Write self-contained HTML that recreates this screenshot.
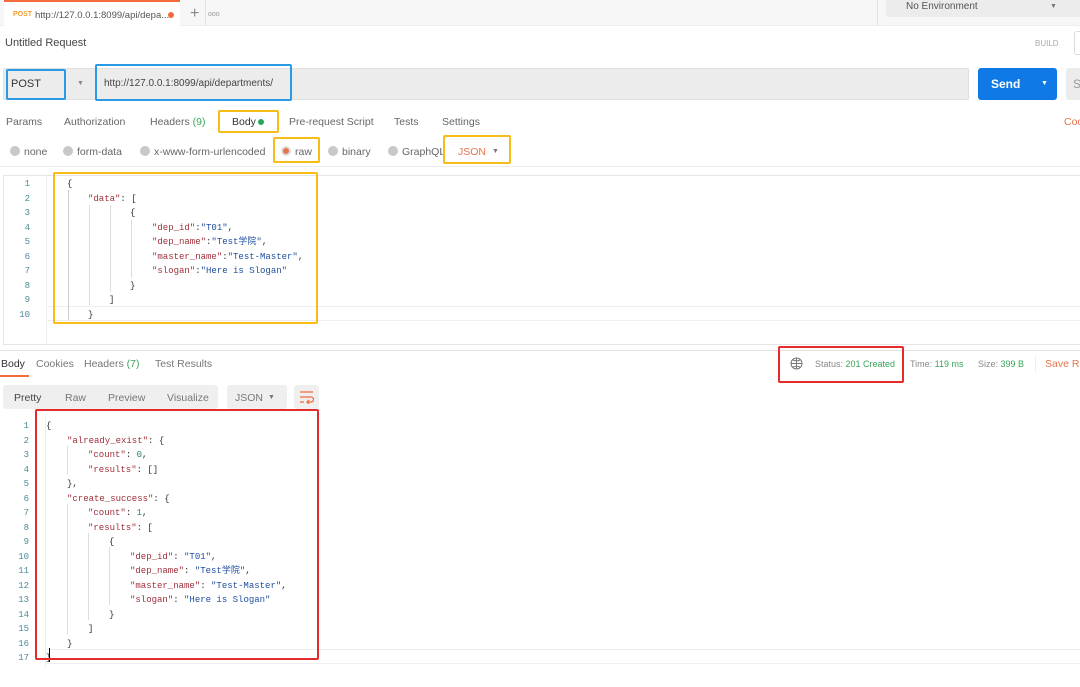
<!DOCTYPE html>
<html><head><meta charset="utf-8"><style>
*{margin:0;padding:0;box-sizing:border-box}
body{width:1080px;height:687px;background:#fff;position:relative;overflow:hidden;font-family:"Liberation Sans","Noto Sans CJK SC",sans-serif;font-size:10.5px;color:#505050}
.a{position:absolute;white-space:nowrap}
.mono{font-family:"Liberation Mono","Noto Sans CJK SC",monospace;font-size:9px}
.k{color:#a0303a}.s{color:#2050a0}.n{color:#1b8a6b}.p{color:#333}
.ln{color:#4a8a9a;text-align:right;width:20px}
.box{position:absolute;border-radius:2px}
.r{width:10px;height:10px;border-radius:50%;background:#c8c8c8;position:absolute}
</style></head><body>
<div class="a" style="left:0;top:0;width:1080px;height:26px;background:#f7f7f7;border-bottom:1px solid #eee"></div>
<div class="a" style="left:4px;top:0;width:176px;height:27px;background:#fff;border-top:2px solid #f26b3a"></div>
<div class="a" style="left:13px;top:11px;font-size:7px;color:#f0a030;font-weight:bold">POST</div>
<div class="a" style="left:35px;top:10px;font-size:9.5px;color:#555">http://127.0.0.1:8099/api/depa...</div>
<div class="a" style="left:168px;top:12px;width:6px;height:6px;border-radius:50%;background:#f26b3a"></div>
<div class="a" style="left:190px;top:5px;font-size:16px;color:#888">+</div>
<div class="a" style="left:208px;top:11px;font-size:7px;color:#999">ooo</div>
<div class="a" style="left:205px;top:0;width:1px;height:26px;background:#e5e5e5"></div>
<div class="a" style="left:877px;top:0;width:1px;height:26px;background:#e5e5e5"></div>
<div class="a" style="left:886px;top:0;width:178px;height:17px;background:#ececec;border-radius:0 0 3px 3px"></div>
<div class="a" style="left:906px;top:1px;font-size:10px;color:#555">No Environment</div>
<div class="a" style="left:1050px;top:3px;font-size:7px;color:#777">▼</div>
<div class="a" style="left:1059px;top:0;width:21px;height:17px;background:#ececec"></div>
<div class="a" style="left:5px;top:37px;font-size:11px;color:#444">Untitled Request</div>
<div class="a" style="left:1035px;top:39px;font-size:8px;color:#aaa">BUILD</div>
<div class="a" style="left:1074px;top:31px;width:10px;height:24px;border:1px solid #ddd;border-radius:3px"></div>
<div class="a" style="left:3px;top:68px;width:966px;height:32px;background:#ececec;border-radius:2px;border:1px solid #e0e0e0"></div>
<div class="a" style="left:11px;top:78px;font-size:11px;color:#333">POST</div>
<div class="a" style="left:77px;top:80px;font-size:7px;color:#888">▼</div>
<div class="a" style="left:104px;top:78px;font-size:10px;color:#444">http://127.0.0.1:8099/api/departments/</div>
<div class="box" style="left:6px;top:69px;width:60px;height:31px;border:2px solid #2a9ae6"></div>
<div class="box" style="left:95px;top:64px;width:197px;height:37px;border:2px solid #2a9ae6"></div>
<div class="a" style="left:978px;top:68px;width:79px;height:32px;background:#0f7ae5;border-radius:3px"></div>
<div class="a" style="left:991px;top:77px;font-size:12px;color:#fff;font-weight:bold">Send</div>
<div class="a" style="left:1041px;top:80px;font-size:7px;color:#fff">▼</div>
<div class="a" style="left:1066px;top:68px;width:20px;height:32px;background:#ececec;border-radius:3px"></div>
<div class="a" style="left:1073px;top:77px;font-size:12px;color:#999">S</div>
<div class="a" style="left:6px;top:116px;color:#666">Params</div>
<div class="a" style="left:64px;top:116px;color:#666">Authorization</div>
<div class="a" style="left:150px;top:116px;color:#666">Headers <span style="color:#3aa55a">(9)</span></div>
<div class="a" style="left:232px;top:116px;color:#333">Body</div>
<div class="a" style="left:258px;top:119px;width:6px;height:6px;border-radius:50%;background:#26a65b"></div>
<div class="box" style="left:218px;top:110px;width:61px;height:23px;border:2px solid #f5bd15"></div>
<div class="a" style="left:289px;top:116px;color:#666">Pre-request Script</div>
<div class="a" style="left:394px;top:116px;color:#666">Tests</div>
<div class="a" style="left:442px;top:116px;color:#666">Settings</div>
<div class="a" style="left:1064px;top:116px;color:#e8744a">Coo</div>
<div class="r" style="left:10px;top:146px"></div><div class="a" style="left:24px;top:146px;color:#666">none</div>
<div class="r" style="left:63px;top:146px"></div><div class="a" style="left:77px;top:146px;color:#666">form-data</div>
<div class="r" style="left:140px;top:146px"></div><div class="a" style="left:154px;top:146px;color:#666">x-www-form-urlencoded</div>
<div class="r" style="left:281px;top:146px;background:#e8744a;border:2px solid #ddd"></div><div class="a" style="left:295px;top:146px;color:#666">raw</div>
<div class="box" style="left:273px;top:137px;width:47px;height:26px;border:2px solid #f5bd15"></div>
<div class="r" style="left:328px;top:146px"></div><div class="a" style="left:342px;top:146px;color:#666">binary</div>
<div class="r" style="left:388px;top:146px"></div><div class="a" style="left:402px;top:146px;color:#666">GraphQL</div>
<div class="a" style="left:458px;top:146px;color:#e8744a">JSON</div>
<div class="a" style="left:492px;top:148px;font-size:7px;color:#777">▼</div>
<div class="box" style="left:443px;top:135px;width:68px;height:29px;border:2px solid #f5bd15"></div>
<div class="a" style="left:0;top:166px;width:1080px;height:1px;background:#eee"></div>
<div class="a" style="left:3px;top:175px;width:1077px;height:170px;border:1px solid #e5e5e5;border-right:none"></div>
<div class="a" style="left:46px;top:176px;width:1px;height:168px;background:#eee"></div>
<div class="a" style="left:48px;top:306px;width:1032px;height:15px;border-top:1px solid #eee;border-bottom:1px solid #eee"></div>
<div class="a mono" style="left:0;top:177px;line-height:14.5px">
<div class="ln" style="position:absolute;left:10px;top:0">1<br>2<br>3<br>4<br>5<br>6<br>7<br>8<br>9<br>10</div>
</div>
<div class="a" style="left:68px;top:190px;width:1px;height:130px;background:#ccc"></div>
<div class="a" style="left:89px;top:205px;width:1px;height:100px;background:#ddd"></div>
<div class="a" style="left:110px;top:205px;width:1px;height:87px;background:#ddd"></div>
<div class="a" style="left:131px;top:220px;width:1px;height:58px;background:#ddd"></div>
<div class="a mono p" style="left:67px;top:177px;line-height:14.5px">
<div style="position:absolute;left:0;top:0">{</div>
<div style="position:absolute;left:21px;top:14.5px"><span class="k">"data"</span>: [</div>
<div style="position:absolute;left:63px;top:29px">{</div>
<div style="position:absolute;left:85px;top:43.5px"><span class="k">"dep_id"</span>:<span class="s">"T01"</span>,</div>
<div style="position:absolute;left:85px;top:58px"><span class="k">"dep_name"</span>:<span class="s">"Test学院"</span>,</div>
<div style="position:absolute;left:85px;top:72.5px"><span class="k">"master_name"</span>:<span class="s">"Test-Master"</span>,</div>
<div style="position:absolute;left:85px;top:87px"><span class="k">"slogan"</span>:<span class="s">"Here is Slogan"</span></div>
<div style="position:absolute;left:63px;top:101.5px">}</div>
<div style="position:absolute;left:42px;top:116px">]</div>
<div style="position:absolute;left:21px;top:130.5px">}</div>
</div>
<div class="box" style="left:53px;top:172px;width:265px;height:152px;border:2px solid #f5bd15"></div>
<div class="a" style="left:0;top:350px;width:1080px;height:1px;background:#e5e5e5"></div>
<div class="a" style="left:1px;top:358px;color:#333">Body</div>
<div class="a" style="left:0;top:375px;width:29px;height:2px;background:#f26b3a"></div>
<div class="a" style="left:36px;top:358px;color:#777">Cookies</div>
<div class="a" style="left:84px;top:358px;color:#777">Headers <span style="color:#3aa55a">(7)</span></div>
<div class="a" style="left:155px;top:358px;color:#777">Test Results</div>
<svg class="a" style="left:790px;top:357px" width="13" height="13" viewBox="0 0 13 13" fill="none" stroke="#777" stroke-width="1"><circle cx="6.5" cy="6.5" r="5.5"/><path d="M1 6.5h11M6.5 1v11M3 3c2 1 5 1 7 0M3 10c2-1 5-1 7 0"/></svg>
<div class="a" style="left:815px;top:359px;font-size:9px;color:#888">Status: <span style="color:#3aa55a">201 Created</span></div>
<div class="box" style="left:778px;top:346px;width:126px;height:37px;border:2px solid #e52b2b"></div>
<div class="a" style="left:910px;top:359px;font-size:9px;color:#888">Time: <span style="color:#3aa55a">119 ms</span></div>
<div class="a" style="left:978px;top:359px;font-size:9px;color:#888">Size: <span style="color:#3aa55a">399 B</span></div>
<div class="a" style="left:1035px;top:356px;width:1px;height:16px;background:#eee"></div>
<div class="a" style="left:1045px;top:358px;color:#e8744a">Save Re</div>
<div class="a" style="left:3px;top:385px;width:215px;height:24px;background:#efefef;border-radius:3px"></div>
<div class="a" style="left:14px;top:392px;color:#444">Pretty</div>
<div class="a" style="left:65px;top:392px;color:#777">Raw</div>
<div class="a" style="left:108px;top:392px;color:#777">Preview</div>
<div class="a" style="left:167px;top:392px;color:#777">Visualize</div>
<div class="a" style="left:227px;top:385px;width:60px;height:24px;background:#efefef;border-radius:3px"></div>
<div class="a" style="left:235px;top:392px;color:#777">JSON</div>
<div class="a" style="left:268px;top:394px;font-size:7px;color:#777">▼</div>
<div class="a" style="left:294px;top:385px;width:25px;height:24px;background:#efefef;border-radius:3px"></div>
<svg class="a" style="left:299px;top:390px" width="15" height="14" viewBox="0 0 15 14" fill="none" stroke="#f26b3a" stroke-width="1.3"><path d="M1 2h13M1 7h11a2.5 2.5 0 0 1 0 5H8M10 10l-2 2 2 2M1 12h4"/></svg>
<div class="a" style="left:45px;top:417px;width:1px;height:250px;background:#eee"></div>
<div class="a" style="left:46px;top:649px;width:1034px;height:15px;border-top:1px solid #eee;border-bottom:1px solid #eee"></div>
<div class="a mono" style="left:9px;top:419px;line-height:14.5px"><div class="ln">1<br>2<br>3<br>4<br>5<br>6<br>7<br>8<br>9<br>10<br>11<br>12<br>13<br>14<br>15<br>16<br>17</div></div>
<div class="a" style="left:67px;top:446px;width:1px;height:28px;background:#ddd"></div>
<div class="a" style="left:67px;top:504px;width:1px;height:130px;background:#ddd"></div>
<div class="a" style="left:88px;top:533px;width:1px;height:87px;background:#ddd"></div>
<div class="a" style="left:109px;top:547px;width:1px;height:58px;background:#ddd"></div>
<div class="a mono p" style="left:46px;top:419px;line-height:14.5px">
<div style="position:absolute;left:0;top:0">{</div>
<div style="position:absolute;left:21px;top:14.5px"><span class="k">"already_exist"</span>: {</div>
<div style="position:absolute;left:42px;top:29px"><span class="k">"count"</span>: <span class="n">0</span>,</div>
<div style="position:absolute;left:42px;top:43.5px"><span class="k">"results"</span>: []</div>
<div style="position:absolute;left:21px;top:58px">},</div>
<div style="position:absolute;left:21px;top:72.5px"><span class="k">"create_success"</span>: {</div>
<div style="position:absolute;left:42px;top:87px"><span class="k">"count"</span>: <span class="n">1</span>,</div>
<div style="position:absolute;left:42px;top:101.5px"><span class="k">"results"</span>: [</div>
<div style="position:absolute;left:63px;top:116px">{</div>
<div style="position:absolute;left:84px;top:130.5px"><span class="k">"dep_id"</span>: <span class="s">"T01"</span>,</div>
<div style="position:absolute;left:84px;top:145px"><span class="k">"dep_name"</span>: <span class="s">"Test学院"</span>,</div>
<div style="position:absolute;left:84px;top:159.5px"><span class="k">"master_name"</span>: <span class="s">"Test-Master"</span>,</div>
<div style="position:absolute;left:84px;top:174px"><span class="k">"slogan"</span>: <span class="s">"Here is Slogan"</span></div>
<div style="position:absolute;left:63px;top:188.5px">}</div>
<div style="position:absolute;left:42px;top:203px">]</div>
<div style="position:absolute;left:21px;top:217.5px">}</div>
<div style="position:absolute;left:0;top:232px">}</div>
</div>
<div class="a" style="left:49px;top:648px;width:1px;height:14px;background:#000"></div>
<div class="box" style="left:35px;top:409px;width:284px;height:251px;border:2px solid #e52b2b"></div>
</body></html>
